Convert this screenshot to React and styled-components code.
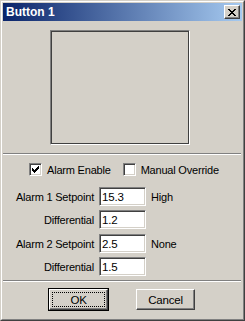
import React from 'react';
import styled, { createGlobalStyle } from 'styled-components';

const Global = createGlobalStyle`
  html, body { margin: 0; padding: 0; background: #d4d0c8; }
  * { box-sizing: border-box; }
`;

const Window = styled.div`
  width: 245px;
  height: 321px;
  background: #d4d0c8;
  border: 1px solid;
  border-color: #d4d0c8 #404040 #404040 #d4d0c8;
  font-family: 'Liberation Sans', Arial, sans-serif;
  font-size: 11px;
  color: #000;
`;

const Inner = styled.div`
  height: 100%;
  border: 1px solid;
  border-color: #fff #808080 #808080 #fff;
  padding: 1px;
  display: flex;
  flex-direction: column;
`;

const TitleBar = styled.div`
  height: 18px;
  flex-shrink: 0;
  display: flex;
  align-items: center;
  justify-content: space-between;
  padding: 0 2px 0 3px;
  background: linear-gradient(to right, #0a246a, #a6caf0);
  color: #fff;
  font-weight: bold;
  font-size: 12px;
`;

const CloseBtn = styled.div`
  width: 16px;
  height: 14px;
  background: #d4d0c8;
  border: 1px solid;
  border-color: #fff #404040 #404040 #fff;
  box-shadow: inset -1px -1px 0 #808080;
  display: flex;
  align-items: center;
  justify-content: center;
`;

const Body = styled.div`
  flex: 1;
  display: flex;
  flex-direction: column;
  letter-spacing: -0.2px;
`;

const Preview = styled.div`
  width: 140px;
  height: 115px;
  margin: 9px 0 0 47px;
  border: 1px solid;
  border-color: #808080 #fff #fff #808080;
  box-shadow: inset 1px 1px 0 #404040, inset -1px -1px 0 #404040;
  background: #d4d0c8;
`;

const Separator = styled.div`
  height: 2px;
  margin: ${p => p.$top}px 1px 0 0;
  border-top: 1px solid #808080;
  border-bottom: 1px solid #fff;
`;

const CheckRow = styled.div`
  display: flex;
  align-items: center;
  margin: 8px 0 0 26px;
  height: 13px;
`;

const CheckItem = styled.label`
  display: flex;
  align-items: center;
  gap: 5px;
  margin-right: ${p => p.$gap || 0}px;
`;

const Box = styled.div`
  width: 13px;
  height: 13px;
  background: #fff;
  border: 1px solid;
  border-color: #808080 #fff #fff #808080;
  box-shadow: inset 1px 1px 0 #404040, inset -1px -1px 0 #d4d0c8;
  position: relative;
`;

const Fields = styled.div`
  display: grid;
  grid-template-columns: 91px 47px auto;
  column-gap: 5px;
  align-items: center;
  margin-top: ${p => p.$top}px;
  row-gap: 4px;
`;

const Label = styled.div`
  text-align: right;
  white-space: nowrap;
`;

const Input = styled.div`
  height: 19px;
  background: #fff;
  border: 1px solid;
  border-color: #808080 #fff #fff #808080;
  box-shadow: inset 1px 1px 0 #404040, inset -1px -1px 0 #d4d0c8;
  padding: 0 2px;
  display: flex;
  align-items: center;
  font-size: 11.5px;
`;

const Footer = styled.div`
  display: flex;
  gap: 26px;
  margin: 6px 0 0 45px;
`;

const Button = styled.div`
  width: ${p => p.$w}px;
  height: 23px;
  background: #d4d0c8;
  border: 1px solid ${p => (p.$default ? '#000' : 'transparent')};
  display: flex;
`;

const ButtonFace = styled.div`
  flex: 1;
  border: 1px solid;
  border-color: #fff #404040 #404040 #fff;
  box-shadow: inset -1px -1px 0 #808080;
  display: flex;
  align-items: center;
  justify-content: center;
  padding: 2px;
  font-size: 11.5px;
`;

const Focus = styled.div`
  flex: 1;
  align-self: stretch;
  display: flex;
  align-items: center;
  justify-content: center;
  border: 1px dotted ${p => (p.$on ? '#000' : 'transparent')};
`;

const Check = () => (
  <svg width="7" height="7" viewBox="0 0 7 7" style={{ position: 'absolute', left: 2, top: 2 }} shapeRendering="crispEdges">
    <path d="M0 2h1v3H0zM1 3h1v3H1zM2 4h1v3H2zM3 3h1v3H3zM4 2h1v3H4zM5 1h1v3H5zM6 0h1v3H6z" fill="#000" />
  </svg>
);

const XIcon = () => (
  <svg width="8" height="7" viewBox="0 0 8 7" shapeRendering="crispEdges">
    <path d="M0 0h2v1H0zM6 0h2v1H6zM1 1h2v1H1zM5 1h2v1H5zM2 2h4v1H2zM3 3h2v1H3zM2 4h4v1H2zM1 5h2v1H1zM5 5h2v1H5zM0 6h2v1H0zM6 6h2v1H6z" fill="#000" />
  </svg>
);

const rowsA = [
  ['Alarm 1 Setpoint', '15.3', 'High'],
  ['Differential', '1.2', ''],
];
const rowsB = [
  ['Alarm 2 Setpoint', '2.5', 'None'],
  ['Differential', '1.5', ''],
];

const FieldGroup = ({ rows, top }) => (
  <Fields $top={top}>
    {rows.map(([label, value, note], i) => (
      <React.Fragment key={i}>
        <Label>{label}</Label>
        <Input>{value}</Input>
        <div>{note}</div>
      </React.Fragment>
    ))}
  </Fields>
);

export default function App() {
  return (
    <>
      <Global />
      <Window>
        <Inner>
          <TitleBar>
            <span>Button 1</span>
            <CloseBtn><XIcon /></CloseBtn>
          </TitleBar>
          <Body>
            <Preview />
            <Separator $top={8} />
            <CheckRow>
              <CheckItem $gap={12}>
                <Box><Check /></Box>
                Alarm Enable
              </CheckItem>
              <CheckItem>
                <Box />
                Manual Override
              </CheckItem>
            </CheckRow>
            <FieldGroup rows={rowsA} top={11} />
            <FieldGroup rows={rowsB} top={5} />
            <Separator $top={4} />
            <Footer>
              <Button $w={61} $default>
                <ButtonFace><Focus $on>OK</Focus></ButtonFace>
              </Button>
              <Button $w={61}>
                <ButtonFace><Focus>Cancel</Focus></ButtonFace>
              </Button>
            </Footer>
          </Body>
        </Inner>
      </Window>
    </>
  );
}
